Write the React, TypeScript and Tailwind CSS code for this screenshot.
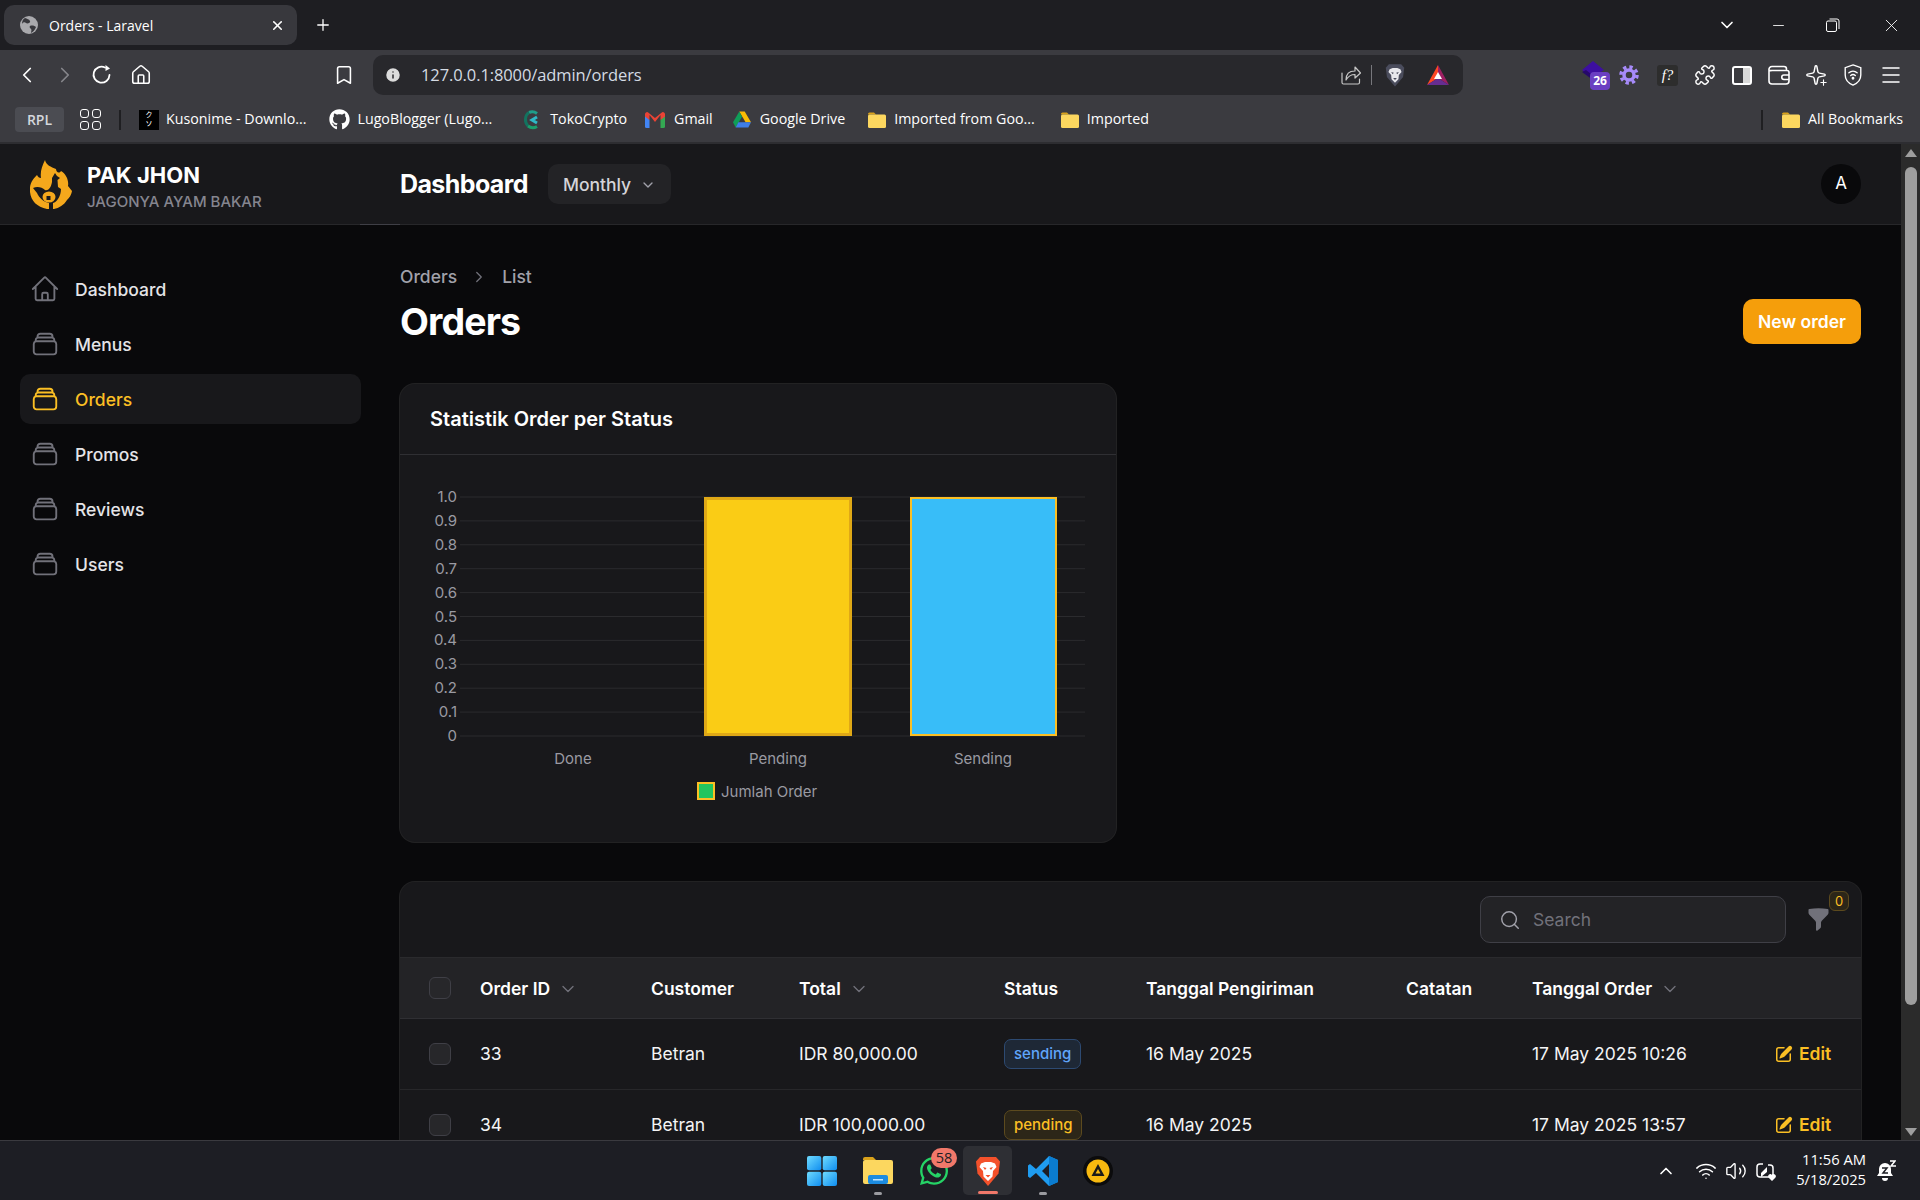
import {
  Bookmark,
  ChevronDown,
  ChevronLeft,
  ChevronRight,
  ChevronUp,
  House,
  Info,
  Menu,
  Minus,
  Plus,
  Puzzle,
  Search,
  Sparkle,
  Volume2,
  Wifi,
  X,
} from "lucide-react";
import { FaGithub, FaWhatsapp } from "react-icons/fa";

const inter = "font-['Inter',sans-serif]";
const chrome = "font-['Open_Sans','Noto_Sans',sans-serif]";

const STACK_PATH =
  "M6 6.878V6a2.25 2.25 0 0 1 2.25-2.25h7.5A2.25 2.25 0 0 1 18 6v.878m-12 0c.235-.083.487-.128.75-.128h10.5c.263 0 .515.045.75.128m-12 0A2.25 2.25 0 0 0 4.5 9v.878m13.5-3A2.25 2.25 0 0 1 19.5 9v.878m0 0a2.246 2.246 0 0 0-.75-.128H5.25c-.263 0-.515.045-.75.128m15 0A2.25 2.25 0 0 1 21 12v6a2.25 2.25 0 0 1-2.25 2.25H5.25A2.25 2.25 0 0 1 3 18v-6c0-.98.626-1.813 1.5-2.122";
const HOME_PATH =
  "m2.25 12 8.954-8.955c.44-.439 1.152-.439 1.591 0L21.75 12M4.5 9.75v10.125c0 .621.504 1.125 1.125 1.125H9.75v-4.875c0-.621.504-1.125 1.125-1.125h2.25c.621 0 1.125.504 1.125 1.125V21h4.125c.621 0 1.125-.504 1.125-1.125V9.75M8.25 21h8.25";

const navItems = [
  { label: "Dashboard", path: HOME_PATH },
  { label: "Menus", path: STACK_PATH },
  { label: "Orders", path: STACK_PATH, active: true },
  { label: "Promos", path: STACK_PATH },
  { label: "Reviews", path: STACK_PATH },
  { label: "Users", path: STACK_PATH },
];

const orders = [
  { id: "33", customer: "Betran", total: "IDR 80,000.00", status: "sending", ship: "16 May 2025", ordered: "17 May 2025 10:26" },
  { id: "34", customer: "Betran", total: "IDR 100,000.00", status: "pending", ship: "16 May 2025", ordered: "17 May 2025 13:57" },
];

const tableCols = "grid grid-cols-[80px_171px_148px_205px_142px_260px_126px_244px_84px]";

function Folder({ className }: { className?: string }) {
  return (
    <svg viewBox="0 0 20 18" className={className}>
      <path d="M1 3a1.5 1.5 0 0 1 1.5-1.5h4.5l2 2H1z" fill="#d9a21b" />
      <rect x="1" y="3.5" width="18" height="13.5" rx="1.5" fill="#fcd75f" />
    </svg>
  );
}

function BraveLion({ shield, face, detail, className }: { shield: string; face: string; detail: string; className?: string }) {
  return (
    <svg viewBox="0 0 26 30" className={className}>
      <path d="M5 1h16l4 4.500-1.500 12L13 30 2.500 17.500 1 5.500z" fill={shield} />
      <path d="M6 7.500 10 6h6l4 1.500 1.500 3.500L18 15l-.5 5.500L13 25l-4.500-4.500L8 15l-3.500-4z" fill={face} />
      <path d="M8 11l3.500 1-1.500 2zM18 11l-3.500 1 1.500 2zM10.500 19h5L13 21.500z" fill={detail} />
    </svg>
  );
}

function TabStrip() {
  return (
    <div className={`${chrome} h-[50px] shrink-0 bg-[#1e1e22] flex items-center text-white`}>
      <div className="ml-1 w-[293px] h-10 rounded-[10px] bg-[#38383d] flex items-center">
        <svg viewBox="0 0 18 18" className="ml-4 w-[18px] h-[18px]">
          <circle cx="9" cy="9" r="9" fill="#a9a9ad" />
          <path d="M5 2c2 1 4 1 5 3S7 8 6 7 3 6 2 8c0-3 1-5 3-6zM10 10c2-1 5 0 6 1-1 3-3 5-5 6 0-2 1-3 0-4s-2-2-1-3z" fill="#38383d" />
        </svg>
        <span className="ml-[11px] text-[14px]">Orders - Laravel</span>
        <X size={15} strokeWidth={2.5} className="ml-auto mr-[12px]" />
      </div>
      <Plus size={18} strokeWidth={1.7} className="ml-[17px]" />
      <ChevronDown size={20} strokeWidth={2} className="ml-auto mr-[-3px]" />
      <Minus size={17} strokeWidth={1.2} className="ml-[36px]" />
      <svg viewBox="0 0 14 14" className="ml-[39px] w-[14px] h-[14px]" fill="none" stroke="white" strokeWidth="1">
        <rect x="0.5" y="3" width="10" height="10.5" rx="1.5" />
        <path d="M3.5 1h7.5a2 2 0 0 1 2 2v8" />
      </svg>
      <X size={21} strokeWidth={1} className="ml-[41px] mr-[18px]" />
    </div>
  );
}

function Toolbar() {
  return (
    <div className="h-[50px] shrink-0 bg-[#3b3b40] flex items-center text-white">
      <ChevronLeft size={26} strokeWidth={1.6} className="ml-[14px]" />
      <ChevronRight size={26} strokeWidth={1.6} className="ml-3 text-[#85858a]" />
      <svg viewBox="0 0 22 22" className="ml-[13px] w-[22px] h-[22px]" fill="none" stroke="white" strokeWidth="1.8" strokeLinecap="round">
        <path d="M18.500 11A8 8 0 1 1 14 3.500" />
        <path d="M14.500 1l4.500 3.500-4.500 2.500z" fill="white" stroke="none" />
      </svg>
      <House size={22} strokeWidth={1.7} className="ml-[17px]" />
      <Bookmark size={22} strokeWidth={1.7} className="ml-[181px]" />
      <div className="ml-[18px] w-[1090px] h-10 rounded-[10px] bg-[#28282c] flex items-center">
        <Info size={18} className="ml-[11px] text-[#28282c] fill-[#dcdcdc]" />
        <span className={`${chrome} ml-[19px] text-[16.5px] text-[#d4dbe3] tracking-[-0.1px]`}>127.0.0.1:8000/admin/orders</span>
        <svg viewBox="0 0 20 20" className="ml-auto w-5 h-5" fill="none" stroke="#c7c7c7" strokeWidth="1.2" strokeLinecap="round" strokeLinejoin="round">
          <path d="M1 8v9.500A1.500 1.500 0 0 0 2.500 19H17a1.500 1.500 0 0 0 1.500-1.500V14" />
          <path d="M5 15c0-6 3-9 9-9V2l5.500 6-5.500 5V9.500c-4 0-7 2-9 5.500z" />
        </svg>
        <div className="ml-[10px] w-px h-5 bg-[#77777c]" />
        <BraveLion shield="#4a4c5c" face="#e8e8ec" detail="#4a4c5c" className="ml-[13px] w-5 h-6" />
        <svg viewBox="0 0 22 20" className="ml-[22px] mr-[14px] w-[22px] h-5">
          <polygon points="11,0 22,20 11,13" fill="#9e1f63" />
          <polygon points="11,0 0,20 11,13" fill="#ff4724" />
          <polygon points="0,20 22,20 11,13" fill="#662d91" />
          <polygon points="11,7 15,14 7,14" fill="#fff" />
        </svg>
      </div>
      <div className="ml-[119px] relative w-[28px] h-7">
        <svg viewBox="0 0 22 20" className="absolute left-0 top-0 w-[22px] h-5">
          <polygon points="11,0 22,9 11,16 0,9" fill="#3d0fa0" />
          <polygon points="0,11 11,19 14,17 4,9" fill="#26086b" />
        </svg>
        <span className="absolute left-2 top-[11px] w-5 h-[18px] rounded-[4px] bg-[#6a3fc2] text-white text-[12px] font-bold leading-[18px] text-center font-['Noto_Sans',sans-serif]">26</span>
      </div>
      <svg viewBox="0 0 20 20" className="ml-[9px] w-5 h-5" fill="none" stroke="#a78bfa">
        <circle cx="10" cy="10" r="8" strokeWidth="3.500" strokeDasharray="3.300 3" />
        <circle cx="10" cy="10" r="5" strokeWidth="3.500" />
      </svg>
      <span className="ml-[18px] w-[21px] h-[21px] rounded-[3px] bg-[#2d2d2d] text-[15px] italic text-center leading-[21px] font-['Liberation_Serif',serif]">f?</span>
      <Puzzle size={22} strokeWidth={1.6} className="ml-[16px]" />
      <div className="ml-[16px] w-5 h-[19px] rounded-[3px] border-2 border-white flex justify-end">
        <div className="w-[7px] bg-[#d9d9d9]" />
      </div>
      <svg viewBox="0 0 22 20" className="ml-[16px] w-[22px] h-5" fill="none" stroke="white" strokeWidth="1.600" strokeLinejoin="round">
        <path d="M1 5V16a3 3 0 0 0 3 3h14a3 3 0 0 0 3-3V7.500a2 2 0 0 0-2-2H3.500A2.500 2.500 0 0 1 1 5a3 3 0 0 1 3-3.500h12a2.500 2.500 0 0 1 2.500 2.500v1.500" />
        <path d="M21 10h-5a2 2 0 0 0 0 4.500h5" />
      </svg>
      <div className="ml-[15px] relative w-[22px] h-[22px]">
        <Sparkle size={22} strokeWidth={1.6} />
        <Plus size={9} strokeWidth={3} className="absolute right-[-1px] bottom-[-1px]" />
      </div>
      <svg viewBox="0 0 20 24" className="ml-[16px] w-5 h-[22px]" fill="none" stroke="white" strokeWidth="1.500" strokeLinecap="round">
        <path d="M10 1l8.500 3v8c0 5-3.500 9-8.500 11-5-2-8.500-6-8.500-11V4z" />
        <path d="M5.500 9.500a7 7 0 0 1 9 0M7.500 12.500a4 4 0 0 1 5 0" />
        <circle cx="10" cy="15.500" r="0.800" fill="white" />
      </svg>
      <Menu size={24} strokeWidth={1.5} className="ml-[16px]" />
    </div>
  );
}

function BookmarksBar() {
  const text = "ml-[7px] mb-[2px] text-[14.25px] text-white whitespace-nowrap";
  return (
    <div className={`${chrome} h-[44px] shrink-0 pb-[3px] bg-[#3b3b40] border-b-2 border-[#2d2d31] flex items-center text-white`}>
      <span className="ml-[15px] w-[49px] h-[25px] rounded-[4px] bg-[#4b4c52] text-[14px] font-semibold text-[#d4d7dc] text-center leading-[25px]">RPL</span>
      <div className="ml-4 grid grid-cols-2 gap-[3px]">
        <span className="w-[9px] h-[9px] rounded-[3px] border-[1.5px] border-white" />
        <span className="w-[9px] h-[9px] rounded-[3px] border-[1.5px] border-white" />
        <span className="w-[9px] h-[9px] rounded-[3px] border-[1.5px] border-white" />
        <span className="w-[9px] h-[9px] rounded-[3px] border-[1.5px] border-white" />
      </div>
      <div className="ml-[18px] w-[2px] h-5 bg-[#1f1f22]" />
      <span className="ml-[18px] w-5 h-5 bg-black text-[7px] leading-[9px] text-center font-['Noto_Sans_CJK_JP',sans-serif]">
        ク<br />ソ
      </span>
      <span className={text}>Kusonime - Downlo...</span>
      <FaGithub size={21} className="ml-[23px]" />
      <span className={text}>LugoBlogger (Lugo...</span>
      <svg viewBox="0 0 18 20" className="ml-[31px] w-[18px] h-5" fill="none" strokeWidth="3">
        <path d="M14 3.500A8 8 0 0 0 6 2.500" stroke="#1f9d8a" />
        <path d="M6 2.500C2 5 1 12 5 16" stroke="#13735f" />
        <path d="M5 16a8 8 0 0 0 9 .5" stroke="#1aa06d" />
        <path d="M14 7l-5 3 5 3" stroke="#2fb8c6" />
      </svg>
      <span className={`${text} ml-[9px]`}>TokoCrypto</span>
      <svg viewBox="0 0 20 16" className="ml-[18px] w-5 h-4">
        <path d="M0 2v12.500A1.500 1.500 0 0 0 1.500 16H4.500V8z" fill="#4285f4" />
        <path d="M20 2v12.500A1.500 1.500 0 0 1 18.500 16H15.500V8z" fill="#34a853" />
        <path d="M0 2a2 2 0 0 1 3.500-1.200L10 6 16.500.8A2 2 0 0 1 20 2v2.500L15.500 8 15.500 3 10 10 4.500 3 4.500 8 0 4.500z" fill="#ea4335" />
      </svg>
      <span className={`${text} ml-[9px]`}>Gmail</span>
      <svg viewBox="0 0 20 18" className="ml-[20px] w-[18px] h-[17px]">
        <polygon points="7,0 13,0 20,12 14,12" fill="#fbbc04" />
        <polygon points="7,0 0,12 3,18 10,6" fill="#0f9d58" />
        <polygon points="6,12 20,12 17,18 3,18" fill="#3f7ee8" />
      </svg>
      <span className={`${text} ml-[9px]`}>Google Drive</span>
      <Folder className="ml-[22px] w-5 h-[18px]" />
      <span className={text}>Imported from Goo...</span>
      <Folder className="ml-[25px] w-5 h-[18px]" />
      <span className={text}>Imported</span>
      <div className="ml-auto w-[2px] h-5 bg-[#1f1f22]" />
      <Folder className="ml-[18px] w-5 h-[18px]" />
      <span className={`${text} mr-[17px]`}>All Bookmarks</span>
    </div>
  );
}

function Logo() {
  return (
    <svg viewBox="0 0 42 49" className="w-[42px] h-[49px] ml-[30px] shrink-0">
      <path
        d="M15 0c1 5 6 7 11 9 0 3 3 5 5 2 5 3 8 9 7 15l4 5c-1 5-3 7-5 9-3 5-8 8-13 9h-7C7 47 1 41 0 32c-1-8 3-13 7-17 1 2 2 3 4 3-1-6 1-12 4-18z"
        fill="#f5a81c"
      />
      <path
        d="M25 13l2 3 3 2-2.500 2 .5 7 3 2c0 7-4 13-8 14v6h-4v-6c-5-1-10-5-12-10l-4-5c4-2 9-1 12 2 3 1 6-2 7-8v-4z"
        fill="#1a1a1d"
      />
      <ellipse cx="19" cy="37" rx="6.500" ry="5.500" fill="#f5a81c" />
      <path d="M16.500 36h4v4h-4z" fill="#1a1a1d" />
    </svg>
  );
}

function Topbar() {
  return (
    <div className="h-[81px] shrink-0 bg-[#18181b] flex flex-col">
      <div className="h-20 flex items-center">
        <div className="w-[400px] flex items-center">
          <Logo />
          <div className="ml-[15px] pt-1">
            <div className="text-[22px] leading-[28px] font-bold text-white">PAK JHON</div>
            <div className="text-[15px] leading-[20px] mt-[3px] font-medium text-[#85858f]">JAGONYA AYAM BAKAR</div>
          </div>
        </div>
        <h2 className="pt-px text-[25px] font-bold tracking-[-0.6px] text-white">Dashboard</h2>
        <button className="ml-5 w-[123px] h-10 rounded-[10px] bg-[#232326] flex items-center pl-[15px] pt-[2px] text-[17.5px] font-medium text-[#d4d4d8]">
          Monthly
          <ChevronDown size={16} className="ml-[9px] text-[#a1a1aa]" />
        </button>
        <div className="ml-auto mr-[40px] w-10 h-10 rounded-full bg-[#09090b] flex items-center justify-center text-[17px] text-white">A</div>
      </div>
      <div className="h-px flex bg-[#27272a]">
        <div className="ml-[360px] w-10 bg-[#3f3f46]" />
      </div>
    </div>
  );
}

function Sidebar() {
  return (
    <aside className="w-[400px] shrink-0 pt-[39px]">
      <nav className="ml-5 w-[341px] flex flex-col gap-[5px]">
        {navItems.map((item) => (
          <a
            key={item.label}
            className={`h-[50px] rounded-[10px] pl-[10px] flex items-center gap-[15px] text-[17.5px] font-medium ${
              item.active ? "bg-[#18181b] text-[#fbbf24]" : "text-[#e4e4e7]"
            }`}
          >
            <svg
              viewBox="0 0 24 24"
              fill="none"
              strokeWidth="1.5"
              strokeLinecap="round"
              strokeLinejoin="round"
              className={`w-[30px] h-[30px] ${item.active ? "stroke-[#fbbf24]" : "stroke-[#71717a]"}`}
            >
              <path d={item.path} />
            </svg>
            <span className="pt-[2px]">{item.label}</span>
          </a>
        ))}
      </nav>
    </aside>
  );
}

function OrdersChart() {
  const ticks = ["1.0", "0.9", "0.8", "0.7", "0.6", "0.5", "0.4", "0.3", "0.2", "0.1", "0"];
  const labels = [
    { text: "Done", x: 173 },
    { text: "Pending", x: 378 },
    { text: "Sending", x: 583 },
  ];
  return (
    <svg viewBox="0 0 716 388" className="w-[716px] h-[388px]" fontFamily="Inter, sans-serif" fontSize="15">
      {ticks.map((tick, i) => {
        const y = 42 + i * 23.9;
        return (
          <g key={tick}>
            <line x1="60" x2="685" y1={y} y2={y} stroke="#2b2b2e" />
            <text x="57" y={y + 5} fill="#9a9aa2" textAnchor="end">{tick}</text>
          </g>
        );
      })}
      <rect x="305.5" y="43.5" width="145" height="236" fill="#facc15" stroke="#dfa816" strokeWidth="3" />
      <rect x="511" y="43" width="145" height="237" fill="#38bdf8" stroke="#fbbf24" strokeWidth="2" />
      {labels.map((l) => (
        <text key={l.text} x={l.x} y="309" fill="#9a9aa2" textAnchor="middle">{l.text}</text>
      ))}
      <rect x="298" y="328" width="16" height="16" fill="#22c55e" stroke="#fbbf24" strokeWidth="2" />
      <text x="321" y="342" fill="#9a9aa2">Jumlah Order</text>
    </svg>
  );
}

function SortChevron() {
  return <ChevronDown size={20} strokeWidth={1.6} className="text-[#71717a] ml-2" />;
}

function Checkbox() {
  return <span className="ml-[29px] w-[22px] h-[22px] rounded-[6px] bg-[#27272a] border border-[#3f3f46]" />;
}

function StatusBadge({ status }: { status: string }) {
  const tone =
    status === "sending"
      ? "bg-[#1e2836] border-[#2d4a72] text-[#60a5fa]"
      : "bg-[#2c2618] border-[#5c4a1e] text-[#fbbf24]";
  return (
    <span className={`h-[30px] px-[9px] rounded-[7px] border text-[15px] font-medium flex items-center ${tone}`}>
      {status}
    </span>
  );
}

function OrdersTable() {
  return (
    <div className="mt-10 w-[1461px] rounded-t-[15px] bg-[#18181b] ring-1 ring-white/10">
      <div className="h-[76px] flex items-center justify-end border-b border-[#2a2a2d]">
        <div className="w-[306px] h-[47px] rounded-[10px] border border-[#3f3f46] bg-[#232326] flex items-center">
          <Search size={22} strokeWidth={1.6} className="ml-[18px] text-[#a1a1aa]" />
          <span className="ml-[12px] pt-[2px] text-[17.5px] text-[#71717a]">Search</span>
        </div>
        <div className="relative ml-[20px] mr-[30px] w-[25px] h-[25px]">
          <svg viewBox="0 0 20 20" className="w-[25px] h-[25px] fill-[#71717a]">
            <path d="M2.628 1.601C5.028 1.206 7.49 1 10 1s4.973.206 7.372.601a.75.75 0 0 1 .628.74v2.288a2.25 2.25 0 0 1-.659 1.59l-4.682 4.683a2.25 2.25 0 0 0-.659 1.59v3.037c0 .684-.31 1.33-.844 1.757l-1.937 1.55A.75.75 0 0 1 8 18.25v-5.757a2.25 2.25 0 0 0-.659-1.591L2.659 6.22A2.25 2.25 0 0 1 2 4.629V2.34a.75.75 0 0 1 .628-.74Z" />
          </svg>
          <span className="absolute left-[23px] -top-[16px] w-[20px] h-[20px] rounded-[6px] bg-[#2c2618] border border-[#5c4a1e] text-[#fbbf24] text-[13px] leading-[18px] text-center">0</span>
        </div>
      </div>
      <div className={`${tableCols} h-[61px] items-center pt-[2px] bg-[#232326] border-b border-[#2f2f33] text-[17.5px] font-semibold text-white`}>
        <div className="flex -mt-[2px]"><Checkbox /></div>
        <div className="flex items-center">Order ID<SortChevron /></div>
        <div>Customer</div>
        <div className="flex items-center">Total<SortChevron /></div>
        <div>Status</div>
        <div>Tanggal Pengiriman</div>
        <div>Catatan</div>
        <div className="flex items-center">Tanggal Order<SortChevron /></div>
        <div />
      </div>
      {orders.map((order) => (
        <div key={order.id} className={`${tableCols} h-[71px] items-center border-b border-[#27272a] text-[17.5px] text-[#f4f4f5]`}>
          <div className="flex"><Checkbox /></div>
          <div>{order.id}</div>
          <div>{order.customer}</div>
          <div>{order.total}</div>
          <div className="flex"><StatusBadge status={order.status} /></div>
          <div>{order.ship}</div>
          <div />
          <div>{order.ordered}</div>
          <a className="-ml-[2px] flex items-center gap-[5px] font-semibold text-[#fbbf24]">
            <svg viewBox="0 0 20 20" className="w-5 h-5 fill-[#fbbf24]">
              <path d="m5.433 13.917 1.262-3.155A4 4 0 0 1 7.58 9.42l6.92-6.918a2.121 2.121 0 0 1 3 3l-6.92 6.918c-.383.383-.84.685-1.343.886l-3.154 1.262a.5.5 0 0 1-.65-.65Z" />
              <path d="M3.5 5.75c0-.69.56-1.25 1.25-1.25H10A.75.75 0 0 0 10 3H4.75A2.75 2.75 0 0 0 2 5.75v9.5A2.75 2.75 0 0 0 4.75 18h9.5A2.75 2.75 0 0 0 17 15.25V10a.75.75 0 0 0-1.5 0v5.25c0 .69-.56 1.25-1.25 1.25h-9.5c-.69 0-1.25-.56-1.25-1.25v-9.5Z" />
            </svg>
            Edit
          </a>
        </div>
      ))}
    </div>
  );
}

function PageContent() {
  return (
    <main className="flex-1 min-w-0 pt-[41px]">
      <div className="h-[22px] flex items-center text-[17.5px] font-medium text-[#a1a1aa]">
        <span>Orders</span>
        <ChevronRight size={18} strokeWidth={1.7} className="ml-[13px] mr-[14px] text-[#71717a]" />
        <span>List</span>
      </div>
      <div className="mt-[11px] w-[1461px] h-[45px] flex items-center justify-between">
        <h1 className="pt-[2px] text-[37.5px] font-bold tracking-[-0.9px] text-white">Orders</h1>
        <button className="w-[118px] h-[45px] pt-px rounded-[10px] bg-[#f59e0b] text-[17.5px] font-semibold text-white">New order</button>
      </div>
      <section className="mt-10 w-[716px] h-[458px] rounded-[15px] bg-[#18181b] ring-1 ring-white/10">
        <div className="h-[71px] pl-[30px] flex items-center border-b border-[#2f2f33] text-[20px] font-semibold text-white">
          Statistik Order per Status
        </div>
        <OrdersChart />
      </section>
      <OrdersTable />
    </main>
  );
}

function ScrollRail() {
  return (
    <div className="w-[19px] shrink-0 bg-[#2b2b2b] flex flex-col items-center">
      <span className="mt-[5px] w-0 h-0 border-x-[6px] border-x-transparent border-b-[8px] border-b-[#9e9e9e]" />
      <span className="mt-[10px] w-3 h-[838px] rounded-[6px] bg-[#9e9e9e]" />
      <span className="mt-auto mb-[4px] w-0 h-0 border-x-[6px] border-x-transparent border-t-[8px] border-t-[#9e9e9e]" />
    </div>
  );
}

function Taskbar() {
  return (
    <div className={`${chrome} h-[60px] shrink-0 bg-[#1d1e24] border-t border-[#3a3a3f] flex items-center text-white`}>
      <svg viewBox="0 0 30 30" className="ml-[807px] w-[30px] h-[30px]">
        <defs>
          <linearGradient id="win" x1="0" y1="0" x2="1" y2="1">
            <stop offset="0" stopColor="#6fdcff" />
            <stop offset="1" stopColor="#0f8df0" />
          </linearGradient>
        </defs>
        <rect width="14.300" height="14.300" rx="2" fill="url(#win)" />
        <rect x="15.700" width="14.300" height="14.300" rx="2" fill="url(#win)" />
        <rect y="15.700" width="14.300" height="14.300" rx="2" fill="url(#win)" />
        <rect x="15.700" y="15.700" width="14.300" height="14.300" rx="2" fill="url(#win)" />
      </svg>
      <div className="ml-[26px] relative w-[30px] h-[30px]">
        <svg viewBox="0 0 30 28" className="w-[30px] h-[28px]">
          <path d="M0 3a2 2 0 0 1 2-2h8l3 3h-13z" fill="#d9a21b" />
          <rect y="4" width="30" height="24" rx="2" fill="#fcd75f" />
          <rect x="5" y="19" width="20" height="9" rx="2" fill="#1c8be0" />
          <rect x="10" y="23" width="10" height="1.500" fill="#bde3ff" />
        </svg>
        <span className="absolute left-[11px] top-[36px] w-2 h-[3px] rounded-full bg-[#9b9ba0]" />
      </div>
      <div className="ml-[25px] relative w-[30px] h-[30px]">
        <FaWhatsapp size={32} className="text-[#25d366] -mt-px" />
        <span className="absolute left-[13px] -top-[8px] w-[26px] h-[20px] rounded-full bg-[#f1786a] text-[#1d1e24] text-[14.5px] leading-[20px] text-center">58</span>
      </div>
      <div className="ml-[15px] w-[49px] h-[49px] rounded-[5px] bg-[#2e2f34] flex flex-col items-center">
        <BraveLion shield="#f4512b" face="#ffffff" detail="#f4512b" className="mt-[10px] w-[26px] h-[30px]" />
        <span className="mt-[5px] w-5 h-[3px] rounded-full bg-[#f1786a]" />
      </div>
      <div className="ml-[16px] relative w-[30px] h-[30px]">
        <svg viewBox="0 0 30 30" className="w-[30px] h-[30px]">
          <path d="M21 0l9 4v22l-9 4L8 17l-6 5-2-1.500v-11L2 8l6 5z" fill="#1f9cf0" />
          <path d="M21 0l9 4v22l-9 4z" fill="#0a7cd0" />
          <path d="M21 8l-7 7 7 7z" fill="#1d1e24" />
        </svg>
        <span className="absolute left-[11px] top-[36px] w-2 h-[3px] rounded-full bg-[#9b9ba0]" />
      </div>
      <svg viewBox="0 0 30 30" className="ml-[25px] w-[30px] h-[30px]">
        <circle cx="15" cy="15" r="15" fill="#0b0b0c" />
        <circle cx="15" cy="15" r="11.500" fill="#f8b90f" />
        <path d="M15 8l6.500 12h-13zM15 13l-2.500 4.500h5z" fill="#1a1a1a" fillRule="evenodd" />
      </svg>
      <ChevronUp size={20} strokeWidth={2} className="ml-[543px]" />
      <Wifi size={22} strokeWidth={1.7} className="ml-[19px]" />
      <Volume2 size={22} strokeWidth={1.5} className="ml-[8px]" />
      <svg viewBox="0 0 22 22" className="ml-[8px] w-[22px] h-[22px]" fill="none" stroke="white" strokeWidth="1.500">
        <path d="M8 4H5a3 3 0 0 0-3 3v7a3 3 0 0 0 3 3h10a3 3 0 0 0 3-3V8a3 3 0 0 0-3-3h-2" />
        <path d="M6 13l6-6v5l-6 5z" fill="white" stroke="none" />
        <path d="M17 21l-3.500-3.500a2 2 0 0 1 3.500-2.500 2 2 0 0 1 3.500 2.500z" fill="white" stroke="none" />
      </svg>
      <div className="ml-auto -mt-[3px] text-right text-[14.75px] leading-[20px]">
        <div>11:56 AM</div>
        <div>5/18/2025</div>
      </div>
      <svg viewBox="0 0 20 22" className="ml-[10px] mr-[24px] w-5 h-[22px]">
        <path d="M9 3a6 6 0 0 0-6 6v4l-2 3h16l-2-3V9a6 6 0 0 0-6-6z" fill="white" />
        <path d="M6 18a3 3 0 0 0 6 0z" fill="white" />
        <path d="M6 8h5l-4 5h5" fill="none" stroke="#1d1e24" strokeWidth="1.500" />
        <path d="M14 1h5l-4 5h5" fill="none" stroke="white" strokeWidth="1.500" />
      </svg>
    </div>
  );
}

export default function App() {
  return (
    <div className={`${inter} w-[1920px] h-[1200px] overflow-hidden flex flex-col bg-[#09090b]`}>
      <TabStrip />
      <Toolbar />
      <BookmarksBar />
      <div className="flex-1 min-h-0 flex overflow-hidden">
        <div className="flex-1 min-w-0 flex flex-col">
          <Topbar />
          <div className="flex min-h-0 flex-1">
            <Sidebar />
            <PageContent />
          </div>
        </div>
        <ScrollRail />
      </div>
      <Taskbar />
    </div>
  );
}
